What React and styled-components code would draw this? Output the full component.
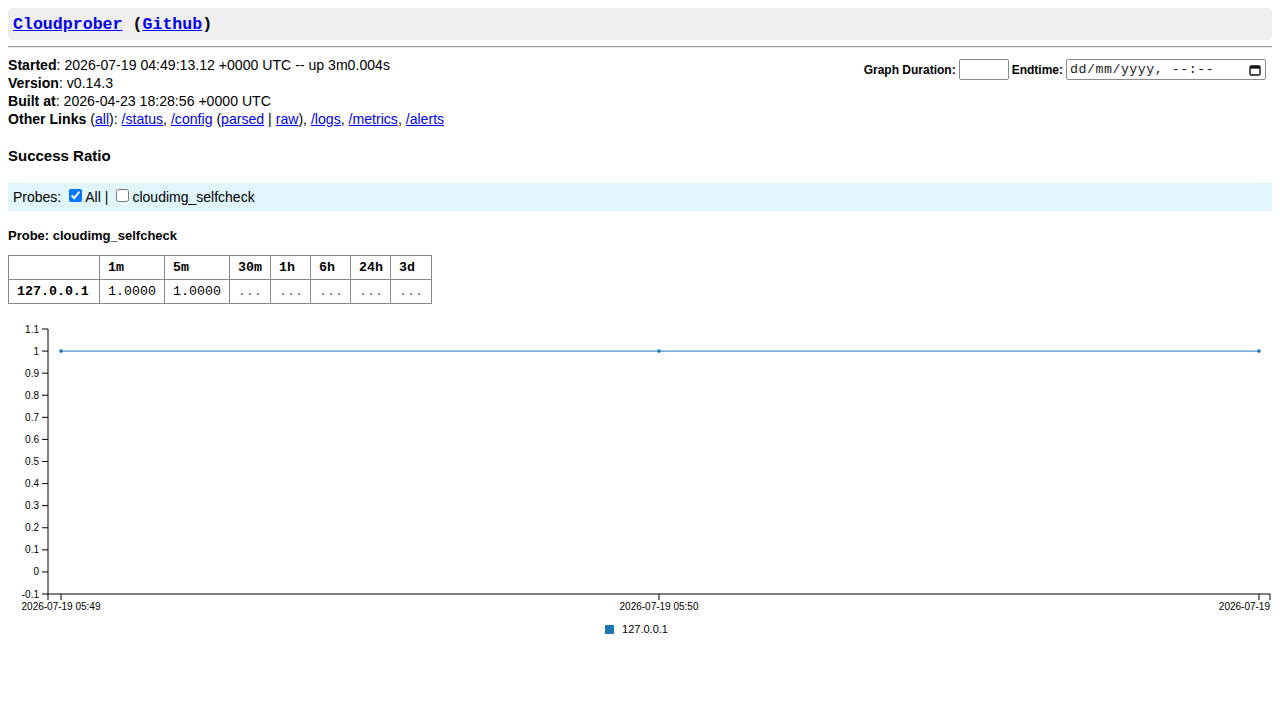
import React from "react";
import styled, { createGlobalStyle } from "styled-components";

const GlobalStyle = createGlobalStyle`
  body {
    margin: 8px;
    font-family: "Liberation Sans", Arial, sans-serif;
    font-size: 14px;
    color: #000;
    background: #fff;
  }
  a { color: #0000ee; }
`;

const Header = styled.div`
  height: 32px;
  display: flex;
  align-items: center;
  padding: 0 5px;
  background-color: #efefef;
  border-radius: 5px;
  font-family: "Liberation Mono", "Courier New", monospace;
  font-weight: bold;
  font-size: 16.6px;
`;

const Rule = styled.hr`
  margin: 6px 0 8px;
  border: none;
  border-top: 1px solid #9a9a9a;
  border-bottom: 1px solid #eee;
`;

const TopRow = styled.div`
  display: flex;
  justify-content: space-between;
  align-items: flex-start;
`;

const Info = styled.div`
  line-height: 18px;
  font-size: 14.1px;
`;

const Form = styled.div`
  display: flex;
  align-items: center;
  gap: 3px;
  margin-top: 3px;
  margin-right: 6px;
  font-size: 12px;
  font-weight: bold;
`;

const Field = styled.div`
  box-sizing: border-box;
  width: ${(p) => p.width}px;
  height: 21px;
  border: 1px solid #8a8a8a;
  border-radius: 2px;
  display: flex;
  align-items: center;
  justify-content: space-between;
  padding: 0 4px 0 3px;
  font-family: "Liberation Mono", "Courier New", monospace;
  font-weight: normal;
  font-size: 13.3px;
  letter-spacing: 0.5px;
  color: #222;
`;

const SectionTitle = styled.div`
  font-weight: bold;
  font-size: 15px;
  margin: 19px 0 19px;
`;

const ProbesBar = styled.div`
  height: 28px;
  background-color: #e1f5fd;
  display: flex;
  align-items: center;
  padding: 0 5px;
  font-size: 14px;
  gap: 4px;

  input {
    margin: 0 3px 0 4px;
    width: 13px;
    height: 13px;
  }
`;

const ProbeTitle = styled.div`
  font-weight: bold;
  font-size: 13px;
  margin: 17px 0 12px;
`;

const Table = styled.table`
  border-collapse: collapse;
  table-layout: fixed;
  font-family: "Liberation Mono", "Courier New", monospace;
  font-size: 13.3px;
`;

const Cell = styled.td`
  border: 1px solid #888;
  height: 24px;
  box-sizing: border-box;
  width: ${(p) => p.$w}px;
  padding: 0 0 0 8px;
  text-align: left;
  white-space: nowrap;
  font-weight: ${(p) => (p.$bold ? "bold" : "normal")};
  color: ${(p) => (p.$muted ? "#666" : "#000")};
`;

const ChartWrap = styled.div`
  margin-top: 11px;
`;

const Legend = styled.div`
  display: flex;
  justify-content: center;
  align-items: center;
  gap: 8px;
  font-size: 11px;
  margin-top: 8px;
  margin-right: 7px;
`;

const Swatch = styled.span`
  width: 9px;
  height: 9px;
  background-color: #1f77b4;
`;

const CalendarIcon = () => (
  <svg width="12" height="12" viewBox="0 0 12 12">
    <rect x="1" y="2" width="10" height="9" rx="1.2" fill="none" stroke="#111" strokeWidth="1.4" />
    <rect x="1" y="2" width="10" height="2.6" fill="#111" />
  </svg>
);

const yTicks = [1.1, 1, 0.9, 0.8, 0.7, 0.6, 0.5, 0.4, 0.3, 0.2, 0.1, 0, -0.1];

function Chart() {
  const top = 14;
  const bottom = 279;
  const left = 40;
  const right = 1262;
  const step = (bottom - top) / 12;
  const yOf = (v) => top + (1.1 - v) * 10 * step;
  const pts = [53, 651, 1251];
  return (
    <svg width="1264" height="300" style={{ display: "block" }}>
      <g fontFamily="Liberation Sans, Arial, sans-serif" fontSize="10" fill="#000">
        <line x1={left} y1={top} x2={left} y2={bottom} stroke="#000" />
        {yTicks.map((v) => (
          <g key={v}>
            <line x1={left - 6} y1={yOf(v)} x2={left} y2={yOf(v)} stroke="#000" />
            <text x={left - 9} y={yOf(v) + 3.5} textAnchor="end">
              {Math.round(v * 10) / 10}
            </text>
          </g>
        ))}
        <line x1={left} y1={bottom} x2={right} y2={bottom} stroke="#000" />
        <line x1={left} y1={bottom} x2={left} y2={bottom + 6} stroke="#000" />
        <line x1={right} y1={bottom} x2={right} y2={bottom + 6} stroke="#000" />
        {pts.map((x) => (
          <line key={x} x1={x} y1={bottom} x2={x} y2={bottom + 6} stroke="#000" />
        ))}
        <text x={53} y={bottom + 16} textAnchor="middle">2026-07-19 05:49</text>
        <text x={651} y={bottom + 16} textAnchor="middle">2026-07-19 05:50</text>
        <text x={1262} y={bottom + 16} textAnchor="end">2026-07-19</text>
        <line x1={pts[0]} y1={yOf(1)} x2={pts[2]} y2={yOf(1)} stroke="#1f77b4" strokeWidth="1" />
        {pts.map((x) => (
          <circle key={x} cx={x} cy={yOf(1)} r="1.8" fill="#1f77b4" />
        ))}
      </g>
    </svg>
  );
}

const columns = [
  { h: "", w: 91 },
  { h: "1m", w: 65 },
  { h: "5m", w: 65 },
  { h: "30m", w: 41 },
  { h: "1h", w: 40 },
  { h: "6h", w: 40 },
  { h: "24h", w: 40 },
  { h: "3d", w: 41 },
];
const values = ["127.0.0.1", "1.0000", "1.0000", "...", "...", "...", "...", "..."];

export default function App() {
  return (
    <>
      <GlobalStyle />
      <Header>
        <a href="#">Cloudprober</a>&nbsp;(<a href="#">Github</a>)
      </Header>
      <Rule />
      <TopRow>
        <Info>
          <div>
            <b>Started</b>: 2026-07-19 04:49:13.12 +0000 UTC -- up 3m0.004s
          </div>
          <div>
            <b>Version</b>: v0.14.3
          </div>
          <div>
            <b>Built at</b>: 2026-04-23 18:28:56 +0000 UTC
          </div>
          <div>
            <b>Other Links</b> (<a href="#">all</a>): <a href="#">/status</a>,{" "}
            <a href="#">/config</a> (<a href="#">parsed</a> | <a href="#">raw</a>),{" "}
            <a href="#">/logs</a>, <a href="#">/metrics</a>, <a href="#">/alerts</a>
          </div>
        </Info>
        <Form>
          <span>Graph Duration:</span>
          <Field width={50} />
          <span>Endtime:</span>
          <Field width={200}>
            <span>dd/mm/yyyy, --:--</span>
            <CalendarIcon />
          </Field>
        </Form>
      </TopRow>
      <SectionTitle>Success Ratio</SectionTitle>
      <ProbesBar>
        Probes:
        <label>
          <input type="checkbox" defaultChecked />
          All
        </label>
        <span>|</span>
        <label>
          <input type="checkbox" />
          cloudimg_selfcheck
        </label>
      </ProbesBar>
      <ProbeTitle>Probe: cloudimg_selfcheck</ProbeTitle>
      <Table>
        <tbody>
          <tr>
            {columns.map((c, i) => (
              <Cell key={i} $bold $w={c.w}>
                {c.h}
              </Cell>
            ))}
          </tr>
          <tr>
            {values.map((v, i) => (
              <Cell key={i} $w={columns[i].w} $bold={i === 0} $muted={v === "..."}>
                {v}
              </Cell>
            ))}
          </tr>
        </tbody>
      </Table>
      <ChartWrap>
        <Chart />
      </ChartWrap>
      <Legend>
        <Swatch />
        127.0.0.1
      </Legend>
    </>
  );
}
